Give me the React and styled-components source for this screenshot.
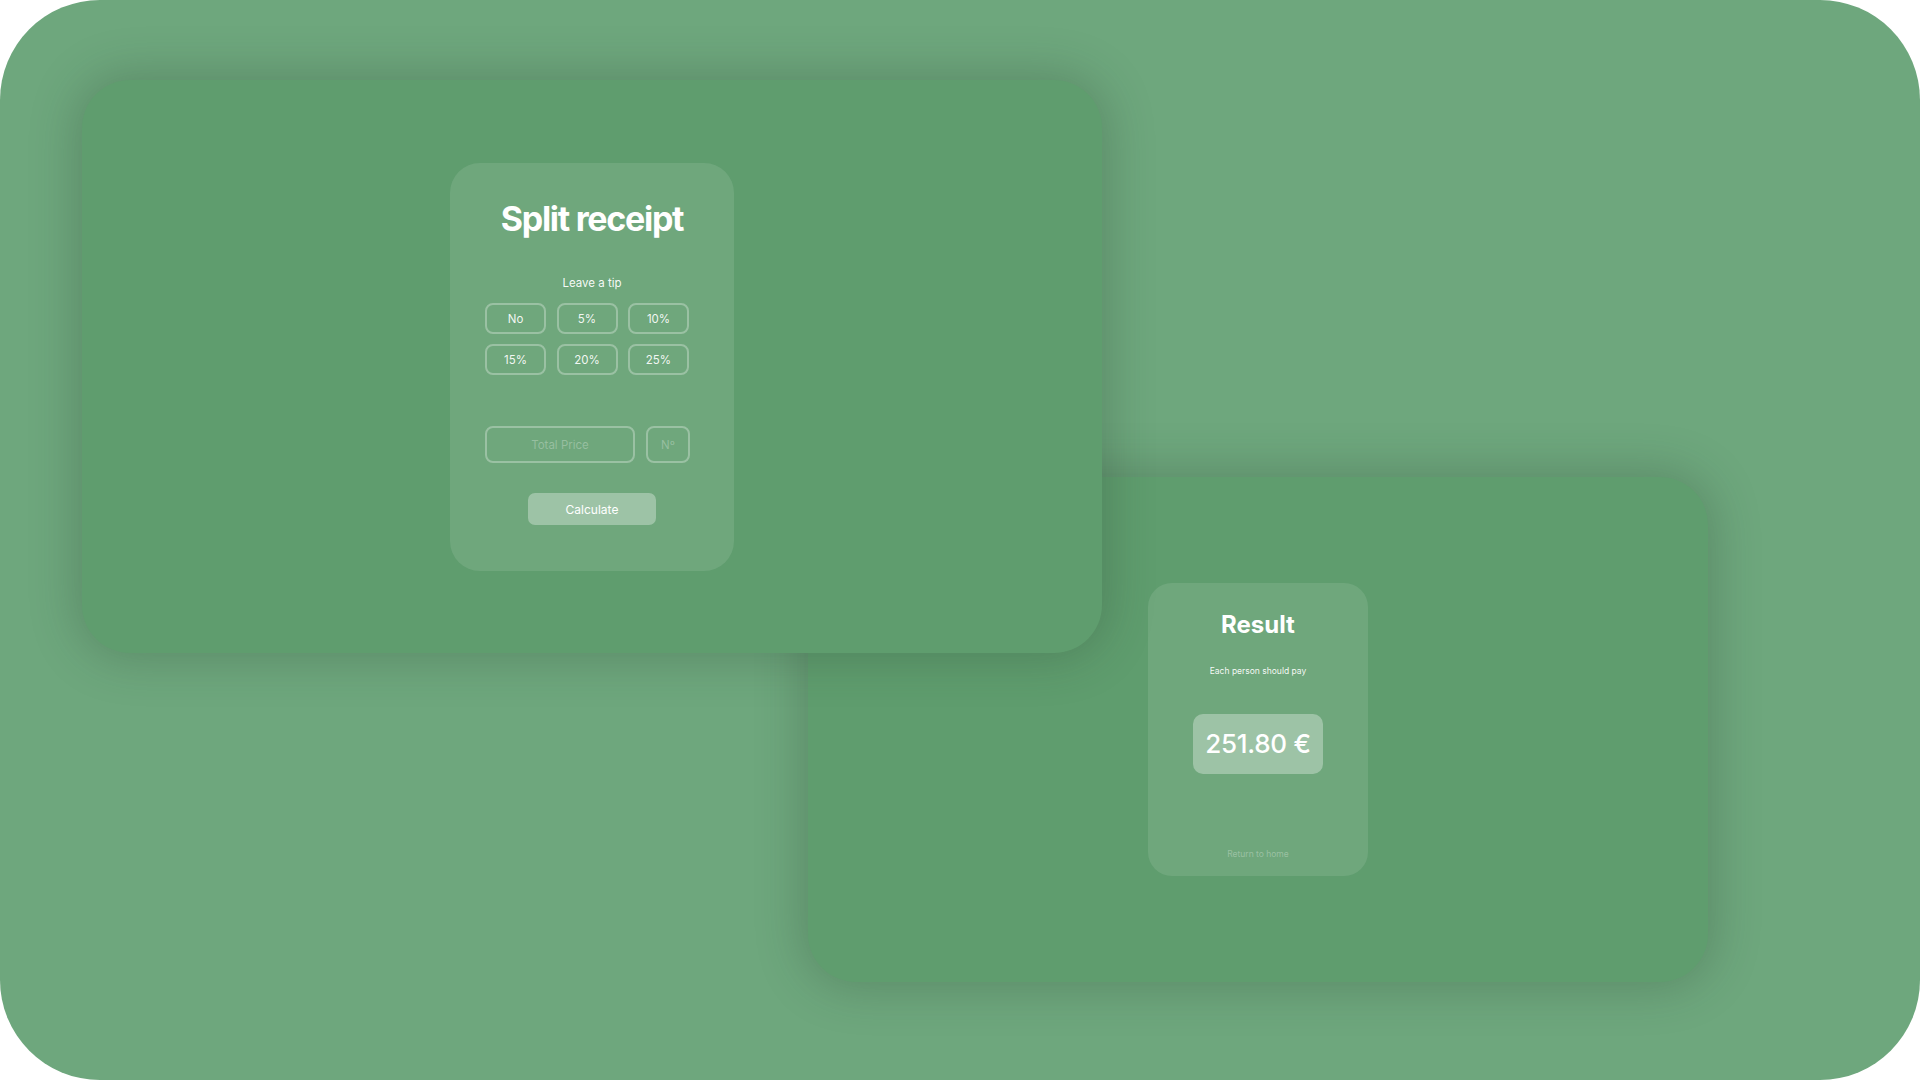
import React from "react";
import styled, { createGlobalStyle } from "styled-components";

const Global = createGlobalStyle`
  html, body { margin: 0; padding: 0; background: #ffffff; }
  body { font-family: Inter, "Open Sans", sans-serif; }
  * { box-sizing: border-box; }
`;

const Canvas = styled.div`
  width: 1920px;
  height: 1080px;
  border-radius: 100px;
  background: #6ea77d;
  overflow: hidden;
  display: grid;
  grid-template-columns: 82px 726px 294px 606px 1fr;
  grid-template-rows: 80px 397px 176px 329px 1fr;
`;

const Panel = styled.section`
  grid-column: ${(p) => p.$col};
  grid-row: ${(p) => p.$row};
  z-index: ${(p) => p.$z};
  background: #5f9d6e;
  border-radius: 48px;
  box-shadow: 0 0 48px 4px rgba(40, 60, 45, 0.28);
  display: flex;
  align-items: center;
  justify-content: center;
`;

const Card = styled.div`
  width: ${(p) => p.$w}px;
  height: ${(p) => p.$h}px;
  border-radius: ${(p) => p.$r}px;
  background: rgba(255, 255, 255, 0.1);
  display: flex;
  flex-direction: column;
  align-items: center;
  padding-top: ${(p) => p.$pt}px;
  color: #ffffff;
`;

const Title = styled.h1`
  margin: 0;
  font-weight: 700;
  font-size: ${(p) => p.$size}px;
  line-height: 1;
  letter-spacing: ${(p) => p.$ls}px;
  color: #ffffff;
`;

const Label = styled.p`
  margin: ${(p) => p.$mt}px 0 0;
  font-size: ${(p) => p.$size}px;
  line-height: 1;
  font-weight: 400;
  color: ${(p) => (p.$faint ? "rgba(255,255,255,0.3)" : "rgba(255,255,255,0.95)")};
`;

const FormBlock = styled.div`
  align-self: flex-start;
  margin-left: 35px;
  display: flex;
  flex-direction: column;
`;

const TipGrid = styled.div`
  margin-top: 14px;
  display: grid;
  grid-template-columns: repeat(3, 61px);
  grid-auto-rows: 31px;
  column-gap: 10.5px;
  row-gap: 10px;
`;

const TipButton = styled.button`
  font-family: inherit;
  font-size: 11.5px;
  color: rgba(255, 255, 255, 0.92);
  background: transparent;
  border: 2px solid rgba(255, 255, 255, 0.3);
  border-radius: 8px;
  padding: 0;
  cursor: pointer;
`;

const InputRow = styled.div`
  margin-top: 51px;
  display: flex;
  gap: 11px;
`;

const Field = styled.input`
  width: ${(p) => p.$w}px;
  height: 37px;
  font-family: inherit;
  font-size: 11.5px;
  text-align: center;
  color: #ffffff;
  background: transparent;
  border: 2px solid rgba(255, 255, 255, 0.3);
  border-radius: 8px;
  outline: none;
  padding: 0;
  &::placeholder { color: rgba(255, 255, 255, 0.28); }
`;

const Calc = styled.button`
  margin-top: 30px;
  width: 128px;
  height: 32px;
  font-family: inherit;
  font-size: 12px;
  color: #ffffff;
  background: rgba(255, 255, 255, 0.32);
  border: none;
  border-radius: 7px;
  cursor: pointer;
`;

const Amount = styled.div`
  margin-top: 38px;
  width: 130px;
  height: 60px;
  border-radius: 10px;
  background: rgba(255, 255, 255, 0.32);
  display: flex;
  align-items: center;
  justify-content: center;
  font-size: 26px;
  font-weight: 500;
  letter-spacing: -0.3px;
  color: #ffffff;
`;

const tips = ["No", "5%", "10%", "15%", "20%", "25%"];

export default function App() {
  return (
    <>
      <Global />
      <Canvas>
        <Panel $col="3 / 5" $row="3 / 5" $z={1}>
          <Card $w={220} $h={293} $r={24} $pt={29.5}>
            <Title $size={24} $ls={0}>Result</Title>
            <Label $size={8.5} $mt={30.5}>Each person should pay</Label>
            <Amount>251.80 €</Amount>
            <Label $size={8.5} $mt={76} $faint>Return to home</Label>
          </Card>
        </Panel>
        <Panel $col="2 / 4" $row="2 / 4" $z={2}>
          <Card $w={284} $h={408} $r={30} $pt={39}>
            <Title $size={34} $ls={-1.3}>Split receipt</Title>
            <Label $size={11.5} $mt={42}>Leave a tip</Label>
            <FormBlock>
              <TipGrid>
                {tips.map((t) => (
                  <TipButton key={t}>{t}</TipButton>
                ))}
              </TipGrid>
              <InputRow>
                <Field $w={150} placeholder="Total Price" />
                <Field $w={44} placeholder="Nº" />
              </InputRow>
            </FormBlock>
            <Calc>Calculate</Calc>
          </Card>
        </Panel>
      </Canvas>
    </>
  );
}
